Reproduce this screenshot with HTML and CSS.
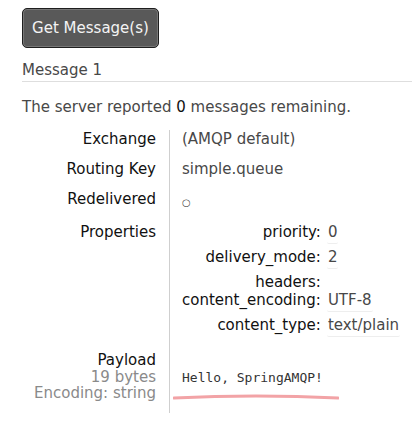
FILE: index.html
```html
<!DOCTYPE html>
<html>
<head>
<meta charset="utf-8">
<link rel="stylesheet" href="styles.css">
</head>
<body>
<div class="page">
  <button class="btn">Get Message(s)</button>
  <h3 class="msg-title">Message 1</h3>
  <p class="summary">The server reported <b>0</b> messages remaining.</p>
  <table class="facts">
    <tr class="row">
      <th>Exchange</th>
      <td>(AMQP default)</td>
    </tr>
    <tr class="row">
      <th>Routing Key</th>
      <td>simple.queue</td>
    </tr>
    <tr class="row row-tall">
      <th>Redelivered</th>
      <td><span class="circle">○</span></td>
    </tr>
    <tr class="row row-props">
      <th>Properties</th>
      <td>
        <table class="props">
          <tr class="prow"><th>priority:</th><td><span class="val">0</span></td></tr>
          <tr class="prow"><th>delivery_mode:</th><td><span class="val">2</span></td></tr>
          <tr class="prow prow-empty"><th>headers:</th><td></td></tr>
          <tr class="prow"><th>content_encoding:</th><td><span class="val">UTF-8</span></td></tr>
          <tr class="prow"><th>content_type:</th><td><span class="val">text/plain</span></td></tr>
        </table>
      </td>
    </tr>
    <tr class="row row-payload">
      <th>Payload<div class="sub">19 bytes</div><div class="sub">Encoding: string</div></th>
      <td>
        <div class="payload">
          <pre class="code">Hello, SpringAMQP!</pre>
          <svg class="squiggle" width="166" height="8" viewBox="0 0 166 8"><path d="M1 5 Q83 1 165 5" fill="none" stroke="#f2a3a6" stroke-width="3" stroke-linecap="round"/></svg>
        </div>
      </td>
    </tr>
  </table>
</div>
</body>
</html>
```

FILE: styles.css
```css
html, body {
  margin: 0;
  padding: 0;
  background: #fff;
}
body {
  font-family: "DejaVu Sans", Verdana, sans-serif;
  font-size: 15px;
  color: #484848;
  overflow: hidden;
}
.page {
  padding: 8px 0 0 22px;
}
.btn {
  display: block;
  width: 137px;
  height: 40px;
  padding: 0;
  margin: 0;
  background: #595959;
  color: #f4f4f4;
  border: 1px solid #1e1e1e;
  border-radius: 5px;
  box-shadow: inset 0 0 0 1px #777;
  font-family: "DejaVu Sans", Verdana, sans-serif;
  font-size: 15px;
}
.msg-title {
  margin: 13px 0 0 0;
  padding: 0 0 2px 0;
  font-size: 15px;
  font-weight: normal;
  line-height: 18px;
  color: #484848;
  border-bottom: 1px solid #dedede;
}
.summary {
  margin: 16px 0 0 0;
  line-height: 18px;
}
.summary b {
  color: #111;
  font-weight: normal;
}
.facts {
  border-collapse: collapse;
  margin-top: 14px;
}
.facts > tbody > tr > th {
  width: 134px;
  padding: 0 13px 0 0;
  text-align: right;
  vertical-align: top;
  font-weight: normal;
  color: #111;
  line-height: 18px;
  box-sizing: content-box;
}
.facts > tbody > tr > td {
  border-left: 1px solid #cfcfcf;
  padding: 0 0 0 12px;
  vertical-align: top;
  line-height: 18px;
}
.row > th, .row > td {
  height: 30px;
}
.row-tall > th, .row-tall > td {
  height: 33px;
}
.circle {
  font-size: 10px;
  position: relative;
  top: 2px;
}
.row-props > th, .row-props > td {
  height: auto;
  padding-bottom: 11px !important;
}
.props {
  border-collapse: collapse;
}
.props th {
  width: 134px;
  padding: 0 6px 0 0;
  text-align: right;
  font-weight: normal;
  color: #111;
  line-height: 18px;
  vertical-align: top;
  height: 25px;
}
.props td {
  padding: 0;
  vertical-align: top;
  line-height: 18px;
}
.prow-empty th { height: 18px; }
.val {
  display: inline-block;
  color: #484848;
  font-size: 15px;
  line-height: 18px;
  padding: 1px 1px 2px 1px;
  margin-top: -1px;
  border-bottom: 1px solid #eeeeee;
  border-radius: 2px;
}
.row-payload > th, .row-payload > td {
  height: 61px;
}
.row-payload > th {
  line-height: 16.5px !important;
  padding-top: 0;
}
.sub {
  color: #8a8a8a;
}
.payload {
  padding-top: 18px;
}
.code {
  margin: 0;
  font-family: "DejaVu Sans Mono", "Liberation Mono", monospace;
  font-size: 13px;
  line-height: 16px;
  color: #333;
}
.squiggle {
  display: block;
  margin: 7px 0 0 -9px;
}
```
